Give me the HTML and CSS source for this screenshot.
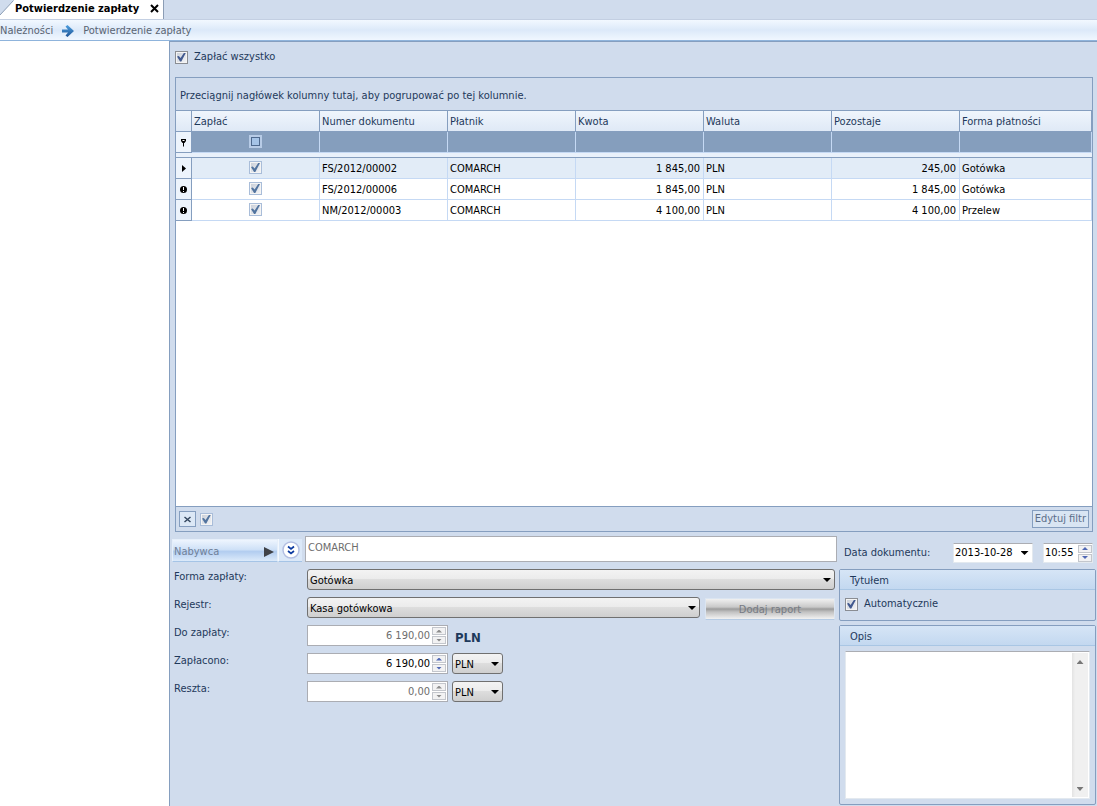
FILE: index.html
```html
<!DOCTYPE html>
<html lang="pl">
<head>
<meta charset="utf-8">
<title>Potwierdzenie zapłaty</title>
<link rel="stylesheet" href="styles.css">
</head>
<body>
<div class="app">
  <div class="tabs">
    <svg class="tab-slope" width="14" height="19" viewBox="0 0 14 19"><path d="M14 0V19H0V15Z" fill="#fff"/><path d="M0 15L13.500 .5" stroke="#8c9db5" fill="none"/></svg>
    <div class="tab">
      <span>Potwierdzenie zapłaty</span>
      <button class="tab-close" type="button" aria-label="Zamknij"><svg width="9" height="9" viewBox="0 0 9 9"><path d="M1 1L8 8M8 1L1 8" stroke="#000" stroke-width="2"/></svg></button>
    </div>
  </div>
  <nav class="crumbs">
    <a href="#">Należności</a>
    <svg width="12" height="12" viewBox="0 0 12 12"><defs><linearGradient id="blue" x1="0" y1="0" x2="0" y2="1"><stop offset="0" stop-color="#4d9fe0"/><stop offset="1" stop-color="#1f5596"/></linearGradient></defs><path d="M0 4.500H6L3.500 1.500L5.500 0L12 6L5.500 12L3.500 10.500L6 7.500H0Z" fill="url(#blue)"/></svg>
    <a href="#">Potwierdzenie zapłaty</a>
  </nav>
  <div class="body">
    <aside class="side"></aside>
    <main class="main">
      <label class="pay-all"><input type="checkbox" class="check" checked><span>Zapłać wszystko</span></label>

      <section class="grid">
        <div class="group-panel">Przeciągnij nagłówek kolumny tutaj, aby pogrupować po tej kolumnie.</div>
        <div class="grid-body">
          <table class="table">
            <colgroup><col class="c-ind"><col class="c"><col class="c"><col class="c"><col class="c"><col class="c"><col class="c"><col></colgroup>
            <thead>
              <tr><th></th><th>Zapłać</th><th>Numer dokumentu</th><th>Płatnik</th><th>Kwota</th><th>Waluta</th><th>Pozostaje</th><th>Forma płatności</th></tr>
            </thead>
            <tbody>
              <tr class="filter">
                <td class="ind"><svg width="7" height="9" viewBox="0 0 7 9"><path d="M1 1H6V3L4.500 5H2.500L1 3Z" fill="#000"/><path d="M2.500 2.500H4.500" stroke="#fff"/><path d="M3.500 4V8.500" stroke="#000"/></svg></td>
                <td class="mid"><input type="checkbox" class="check soft mixed" aria-label="Filtr: Zapłać"></td><td></td><td></td><td></td><td></td><td></td><td></td>
              </tr>
              <tr class="gap"><td colspan="8"></td></tr>
              <tr class="current">
                <td class="ind"><svg width="7" height="9" viewBox="0 0 7 9"><path d="M2 1L6 4.500L2 8Z" fill="#000"/></svg></td>
                <td class="mid"><input type="checkbox" class="check soft" checked aria-label="Zapłać FS/2012/00002"></td><td>FS/2012/00002</td><td>COMARCH</td><td class="num">1 845,00</td><td>PLN</td><td class="num">245,00</td><td>Gotówka</td>
              </tr>
              <tr>
                <td class="ind"><svg width="7" height="7" viewBox="0 0 7 7"><circle cx="3.500" cy="3.500" r="3.500" fill="#000"/><path d="M3.500 1V4M3.500 5V6" stroke="#fff"/></svg></td>
                <td class="mid"><input type="checkbox" class="check soft" checked aria-label="Zapłać FS/2012/00006"></td><td>FS/2012/00006</td><td>COMARCH</td><td class="num">1 845,00</td><td>PLN</td><td class="num">1 845,00</td><td>Gotówka</td>
              </tr>
              <tr>
                <td class="ind"><svg width="7" height="7" viewBox="0 0 7 7"><circle cx="3.500" cy="3.500" r="3.500" fill="#000"/><path d="M3.500 1V4M3.500 5V6" stroke="#fff"/></svg></td>
                <td class="mid"><input type="checkbox" class="check soft" checked aria-label="Zapłać NM/2012/00003"></td><td>NM/2012/00003</td><td>COMARCH</td><td class="num">4 100,00</td><td>PLN</td><td class="num">4 100,00</td><td>Przelew</td>
              </tr>
            </tbody>
          </table>
        </div>
        <div class="filter-bar">
          <button class="clear" type="button" aria-label="Wyczyść filtr"><svg width="7" height="7" viewBox="0 0 7 7"><path d="M.5 1L6.500 6M6.500 1L.5 6" stroke="#34475f" stroke-width="1.500"/></svg></button>
          <input type="checkbox" class="check soft" checked aria-label="Filtr aktywny">
          <button class="edit-filter" type="button">Edytuj filtr</button>
        </div>
      </section>

      <div class="bottom">
        <form class="form">
          <div class="buyer">
            <button class="buyer-btn" type="button" disabled><span>Nabywca</span><svg width="10" height="10" viewBox="0 0 10 10"><path d="M0 0L10 5L0 10Z" fill="#3f4248"/></svg></button>
            <button class="expand" type="button" aria-label="Rozwiń"><svg width="18" height="18" viewBox="0 0 18 18"><circle cx="9" cy="9" r="8" fill="#fff" stroke="#b3bfe2" stroke-width="1.500"/><path d="M6 5.500L9 8L12 5.500M6 10L9 12.500L12 10" stroke="#0b3aa0" stroke-width="1.700" fill="none"/></svg></button>
            <input class="box buyer-name" type="text" value="COMARCH" aria-label="Nabywca" disabled>
          </div>
          <div class="row"><label for="forma">Forma zapłaty:</label>
            <span class="select grow"><select id="forma"><option>Gotówka</option></select></span></div>
          <div class="row"><label for="rejestr">Rejestr:</label>
            <span class="select grow"><select id="rejestr"><option>Kasa gotówkowa</option></select></span>
            <button class="report" type="button" disabled>Dodaj raport</button></div>
          <div class="row"><label for="due">Do zapłaty:</label>
            <span class="box spin off"><input id="due" type="text" value="6 190,00" disabled><span class="steps"><button type="button" aria-label="Więcej" disabled></button><button type="button" aria-label="Mniej" disabled></button></span></span>
            <strong class="currency">PLN</strong></div>
          <div class="row"><label for="paid">Zapłacono:</label>
            <span class="box spin"><input id="paid" type="text" value="6 190,00"><span class="steps"><button type="button" aria-label="Więcej"></button><button type="button" aria-label="Mniej"></button></span></span>
            <span class="select small"><select aria-label="Waluta zapłaty"><option>PLN</option></select></span></div>
          <div class="row"><label for="change">Reszta:</label>
            <span class="box spin off"><input id="change" type="text" value="0,00" disabled><span class="steps"><button type="button" aria-label="Więcej" disabled></button><button type="button" aria-label="Mniej" disabled></button></span></span>
            <span class="select small"><select aria-label="Waluta reszty"><option>PLN</option></select></span></div>
        </form>

        <div class="details">
          <div class="date-row">
            <label for="date">Data dokumentu:</label>
            <span class="field date"><input id="date" type="text" value="2013-10-28"><button class="drop" type="button" aria-label="Wybierz datę"></button></span>
            <span class="field time"><input type="text" value="10:55" aria-label="Godzina"><span class="steps"><button type="button" aria-label="Później"></button><button type="button" aria-label="Wcześniej"></button></span></span>
          </div>
          <section class="panel">
            <h2>Tytułem</h2>
            <label class="auto"><input type="checkbox" class="check" checked><span>Automatycznie</span></label>
          </section>
          <section class="panel notes">
            <h2><label for="opis">Opis</label></h2>
            <div class="notes-box">
              <textarea id="opis"></textarea>
              <div class="scroll"><i class="tri up"></i><i class="tri down"></i></div>
            </div>
          </section>
        </div>
      </div>
    </main>
  </div>
</div>
</body>
</html>
```
FILE: styles.css
```css
* { box-sizing: border-box; }
body {
  margin: 0;
  background: #d0dced;
  color: #1e395b;
}
body, input, select, button, textarea {
  font: 11px/14px "DejaVu Sans Condensed", "DejaVu Sans", sans-serif;
  font-stretch: condensed;
}
button { padding: 0; border: 0; background: none; color: inherit; }
svg { display: block; flex: none; }

.app { display: flex; flex-direction: column; min-height: 100vh; }

/* tabs */
.tabs { display: flex; height: 19px; }
.tab {
  display: flex; align-items: center; gap: 11px;
  padding: 0 4px 2px 1px;
  background: #fff; border-right: 1px solid #8c9db5;
  color: #000; font-weight: bold;
}

/* breadcrumbs */
.crumbs {
  display: flex; align-items: center; gap: 9px;
  height: 22px; padding-top: 2px;
  background: linear-gradient(#f2f8ff, #dce9f9 50%, #f0f7ff);
  border-top: 1px solid #c3cfe2; border-bottom: 1px solid #8fb4dc;
}
.crumbs a { color: #5a6472; text-decoration: none; }

.body { display: flex; flex: 1; }
.side { width: 169px; background: #fff; flex: none; }
.main {
  display: flex; flex-direction: column; flex: 1; min-width: 0;
  border-left: 1px solid #859ebf; border-top: 1px solid #859ebf;
}

/* checkboxes */
.check {
  appearance: none; flex: none;
  display: block; width: 13px; height: 13px; margin: 0;
  border: 1px solid #8a8d93;
  background: linear-gradient(135deg, #c6ccd6, #f6f7f9);
  box-shadow: inset 0 0 0 1px #f4f4f4;
}
.check:checked::before {
  content: ""; display: block; width: 9px; height: 9px; margin: 1px;
  background: #41598f;
  clip-path: polygon(0 45%, 20% 38%, 40% 62%, 80% 0, 100% 0, 48% 100%, 34% 100%);
}
.check.soft { border-color: #a9bdd9; }
.check.soft:checked::before { background: #52749f; }
.check.mixed { border: 2px solid #b7cbe6; background: #a5c3e6; box-shadow: inset 0 0 0 1px #4e698e; }
.pay-all { display: flex; align-items: center; gap: 6px; height: 30px; margin: 0 5px 5px; }

/* document grid */
.grid {
  display: flex; flex-direction: column; flex: 1;
  margin: 0 4px 0 5px; border: 1px solid #859ebf;
}
.group-panel { padding: 11px 4px 7px; }
.grid-body { flex: 1; background: #fff; border-top: 1px solid #859ebf; border-bottom: 1px solid #859ebf; }
.table { width: 100%; table-layout: fixed; border-spacing: 0; color: #000; }
.c-ind { width: 16px; }
.c { width: 128px; }
.table th {
  height: 21px; padding: 2px 2px 0; text-align: left; font-weight: normal; color: #1e395b;
  background: linear-gradient(#eff5fc, #dfe9f6);
  border-right: 1px solid #859ebf; border-bottom: 1px solid #859ebf;
}
.table td {
  height: 21px; padding: 2px 3px 0 2px;
  border-right: 1px solid #c5d9f4; border-bottom: 1px solid #c5d9f4;
}
.table td.mid { padding: 0 0 1px; }
.table .filter td { background: #859ebd; }
.table .current td { background: #e2ecf7; }
.table td.ind, .table .filter td.ind {
  padding: 0 4px; background: #edf4fc;
  border-right-color: #859ebf; border-bottom-color: #859ebf;
}
.table .gap td { height: 5px; padding: 0; background: #e9f1fb; border-right: 0; border-bottom-color: #859ebf; }
.mid .check { margin: 0 auto; }
.table .num { text-align: right; }
.filter-bar { display: flex; align-items: center; gap: 4px; height: 24px; padding: 0 3px; }
.clear {
  display: flex; align-items: center; justify-content: center;
  width: 17px; height: 16px; border: 1px solid #859ebf; background: #dce8f6;
}
.edit-filter {
  height: 18px; margin-left: auto; padding: 0 2px;
  border: 1px solid #859ebf; background: #d9e5f3; color: #5d6f8a;
}

/* payment form */
.bottom { display: flex; gap: 2px; padding: 5px 1px 1px 2px; }
.form { display: flex; flex-direction: column; flex: 1; gap: 7px; min-width: 0; }
.buyer { display: flex; align-items: flex-end; height: 25px; }
.buyer-btn {
  display: flex; align-items: center; justify-content: space-between;
  width: 106px; height: 23px; padding: 2px 3px 0 1px; color: #6f7f98;
  background: linear-gradient(#eef5fe, #cfe1f7 45%, #b2cdf0 55%, #dceafa);
  border: 1px solid #e6effa; border-bottom-color: #a5c4e6;
}
.expand {
  display: flex; align-items: center; justify-content: center;
  width: 24px; height: 23px; margin: 0 3px 0 0;
  background: #dbe8f8; border-left: 1px solid #f3f8fe; border-bottom: 1px solid #a5c4e6;
}
.box { border: 1px solid #abadb3; background: #fff; color: #000; }
.buyer-name { flex: 1; min-width: 0; height: 26px; padding: 0 2px 4px; color: #6d6d6d; }
.row { display: flex; align-items: flex-start; height: 21px; padding-right: 2px; }
.row label { width: 135px; padding: 1px 0 0 2px; flex: none; }
.select { position: relative; display: flex; }
.grow { flex: 1; }
.small { width: 51px; margin-left: 4px; }
.select select {
  appearance: none; width: 100%; height: 21px; padding: 2px 16px 0 2px; color: #000;
  border: 1px solid #707070; border-radius: 3px;
  background: linear-gradient(#f3f3f3, #ebebeb 49%, #dddddd 50%, #cfcfcf);
}
.select::after, .drop::before {
  content: ""; width: 8px; height: 4px; background: #000;
  clip-path: polygon(0 0, 100% 0, 50% 100%);
}
.select::after { position: absolute; right: 4px; top: 9px; pointer-events: none; }
.report {
  width: 130px; height: 22px; margin: 1px 0 0 5px; padding-top: 2px; color: #767b83;
  border: 1px solid #dbe5f1; border-bottom-color: #b5cbe4;
  background: linear-gradient(#f0f0f0, #c9c9c9 40%, #9c9c9c 50%, #c2c2c2 65%, #f2f2f2);
}
.spin { display: flex; align-items: center; width: 141px; height: 21px; padding-right: 1px; }
.spin input, .field input {
  flex: 1; min-width: 0; padding: 0 2px; border: 0; background: none; color: #000;
}
.spin input { text-align: right; }
.spin.off input { color: #6d6d6d; }
.steps { display: flex; flex-direction: column; gap: 1px; flex: none; }
.steps button {
  display: flex; align-items: center; justify-content: center;
  width: 14px; height: 8px; border: 1px solid #c3c6cc; background: #f2f2f3;
}
.steps button::before {
  content: ""; width: 6px; height: 3px; background: #5068b4;
  clip-path: polygon(50% 0, 100% 100%, 0 100%);
}
.steps button:last-child::before { clip-path: polygon(0 0, 100% 0, 50% 100%); }
.off .steps button::before { background: #8b8b8b; }
.currency { padding: 6px 7px 0; font-size: 13px; }

/* details column */
.details { display: flex; flex-direction: column; gap: 4px; width: 257px; flex: none; }
.date-row { display: flex; align-items: center; height: 28px; padding: 4px 3px 0 5px; }
.field { display: flex; align-items: center; height: 20px; background: #fff; border: 1px solid #e3e9ef; border-top-color: #abadb3; }
.date { width: 80px; margin: 0 10px 0 auto; }
.time { width: 50px; }
.field input { padding: 0 1px; }
.drop { display: flex; align-items: center; justify-content: center; width: 15px; height: 16px; }
.panel { border: 1px solid #859ebf; border-radius: 2px; }
.panel h2 {
  margin: 0; padding: 4px 10px 1px; font: inherit;
  background: linear-gradient(#d6e5f6, #c3d8f0); border-bottom: 1px solid #a9c6e4;
}
.auto { display: flex; align-items: center; gap: 6px; height: 30px; padding: 0 5px 2px; }
.notes-box {
  display: flex; height: 148px; margin: 5px; padding: 1px;
  background: #fff; border: 1px solid #e3e9ef; border-top-color: #abadb3;
}
.notes textarea { flex: 1; min-width: 0; border: 0; resize: none; outline: 0; }
.scroll {
  display: flex; flex-direction: column; align-items: center; justify-content: space-between;
  width: 16px; padding: 7px 0 6px; background: linear-gradient(90deg, #e3e3e3, #f0f0f0 20%);
}
.tri { width: 7px; height: 4px; background: #777; clip-path: polygon(50% 0, 100% 100%, 0 100%); }
.tri.down { clip-path: polygon(0 0, 100% 0, 50% 100%); }
```
